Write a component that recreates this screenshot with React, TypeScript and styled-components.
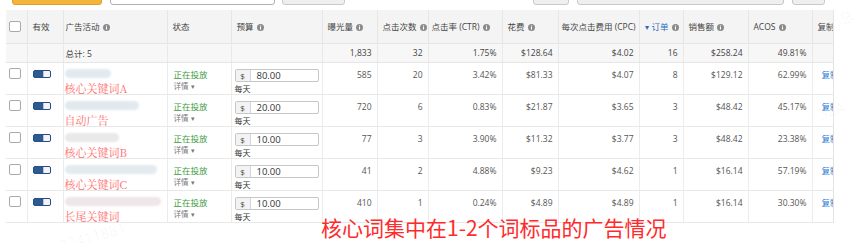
import React from 'react';
import styled, { createGlobalStyle } from 'styled-components';

const GlobalStyle = createGlobalStyle`
  html, body { margin: 0; padding: 0; background: #fff; }
  body { font-family: "Open Sans", "Noto Sans CJK SC", sans-serif; }
`;

interface CampaignRow {
  name: string;
  blur: number;
  blurColor: string;
  budget: string;
  impressions: string;
  clicks: string;
  ctr: string;
  spend: string;
  cpc: string;
  orders: string;
  sales: string;
  acos: string;
}

const rows: CampaignRow[] = [
  { name: '核心关键词A', blur: 46, blurColor: '#e2eaef', budget: '80.00', impressions: '585', clicks: '20', ctr: '3.42%', spend: '$81.33', cpc: '$4.07', orders: '8', sales: '$129.12', acos: '62.99%' },
  { name: '自动广告', blur: 74, blurColor: '#e1e9ee', budget: '20.00', impressions: '720', clicks: '6', ctr: '0.83%', spend: '$21.87', cpc: '$3.65', orders: '3', sales: '$48.42', acos: '45.17%' },
  { name: '核心关键词B', blur: 54, blurColor: '#e9e8ea', budget: '10.00', impressions: '77', clicks: '3', ctr: '3.90%', spend: '$11.32', cpc: '$3.77', orders: '3', sales: '$48.42', acos: '23.38%' },
  { name: '核心关键词C', blur: 92, blurColor: '#e3ebef', budget: '10.00', impressions: '41', clicks: '2', ctr: '4.88%', spend: '$9.23', cpc: '$4.62', orders: '1', sales: '$16.14', acos: '57.19%' },
  { name: '长尾关键词', blur: 96, blurColor: '#eee6e8', budget: '10.00', impressions: '410', clicks: '1', ctr: '0.24%', spend: '$4.89', cpc: '$4.89', orders: '1', sales: '$16.14', acos: '30.30%' },
];

const colWidths = [21, 36, 104, 64, 91, 55, 51, 74, 56, 81, 44, 65, 64, 21];

export default function App() {
  return (
    <Page>
      <GlobalStyle />
      <Toolbar>
        <OrangeButton />
        <SearchBox />
        <GrayButton $width={63} />
        <Spacer />
        <GrayButton $width={36} />
        <GrayButton $width={207} />
        <GrayButton $width={33} />
      </Toolbar>

      <Table>
        <colgroup>
          {colWidths.map((w, i) => <col key={i} style={{ width: w }} />)}
        </colgroup>
        <thead>
          <HeadRow>
            <HeadCell><Checkbox /></HeadCell>
            <HeadCell>有效</HeadCell>
            <HeadCell $pad={2}>广告活动<InfoIcon /></HeadCell>
            <HeadCell>状态</HeadCell>
            <HeadCell>预算<InfoIcon /></HeadCell>
            <HeadCell>曝光量<InfoIcon /></HeadCell>
            <HeadCell>点击次数<InfoIcon /></HeadCell>
            <HeadCell $pad={3}>点击率 (CTR)<InfoIcon /></HeadCell>
            <HeadCell>花费<InfoIcon /></HeadCell>
            <HeadCell $pad={3}>每次点击费用 (CPC)</HeadCell>
            <HeadCell $sorted><Caret>▾</Caret>订单<InfoIcon /></HeadCell>
            <HeadCell>销售额<InfoIcon /></HeadCell>
            <HeadCell>ACOS<InfoIcon /></HeadCell>
            <HeadCell>复制</HeadCell>
          </HeadRow>
        </thead>
        <tbody>
          <TotalRow>
            <TotalCell />
            <TotalCell />
            <TotalCell $pad={2}>总计: 5</TotalCell>
            <TotalCell />
            <TotalCell />
            <TotalCell $right>1,833</TotalCell>
            <TotalCell $right>32</TotalCell>
            <TotalCell $right>1.75%</TotalCell>
            <TotalCell $right>$128.64</TotalCell>
            <TotalCell $right>$4.02</TotalCell>
            <TotalCell $right>16</TotalCell>
            <TotalCell $right>$258.24</TotalCell>
            <TotalCell $right>49.81%</TotalCell>
            <TotalCell />
          </TotalRow>
          {rows.map((r, i) => (
            <DataRow key={i}>
              <Cell $top={5} $pad={3}><Checkbox /></Cell>
              <Cell $top={7} $pad={5}><Toggle><ToggleKnob /></Toggle></Cell>
              <Cell $top={6} $pad={1}>
                <BlurredName style={{ width: r.blur, background: r.blurColor }} />
                <NoteLabel>{r.name}</NoteLabel>
              </Cell>
              <Cell $top={6}>
                <StatusText>正在投放</StatusText>
                <DetailLink>详情<SmallCaret>▾</SmallCaret></DetailLink>
              </Cell>
              <Cell $top={6} $pad={3}>
                <BudgetInput>
                  <Currency>$</Currency>
                  <BudgetValue>{r.budget}</BudgetValue>
                </BudgetInput>
                <PerDay>每天</PerDay>
              </Cell>
              <Cell $right>{r.impressions}</Cell>
              <Cell $right>{r.clicks}</Cell>
              <Cell $right>{r.ctr}</Cell>
              <Cell $right>{r.spend}</Cell>
              <Cell $right>{r.cpc}</Cell>
              <Cell $right>{r.orders}</Cell>
              <Cell $right>{r.sales}</Cell>
              <Cell $right>{r.acos}</Cell>
              <Cell $pad={9}><CopyLink>复制</CopyLink></Cell>
            </DataRow>
          ))}
        </tbody>
      </Table>

      <Annotation>核心词集中在1-2个词标品的广告情况</Annotation>
      <Watermark $x={58} $y={226}>32411881</Watermark>
      <Watermark $x={818} $y={100}>32A</Watermark>
      <Watermark $x={838} $y={4}>总 2</Watermark>
    </Page>
  );
}

const InfoIcon = () => (
  <Info viewBox="0 0 10 10">
    <circle cx="5" cy="5" r="5" fill="#8a8a8a" />
    <rect x="4.2" y="4.3" width="1.6" height="3.6" fill="#fff" />
    <circle cx="5" cy="2.7" r="0.9" fill="#fff" />
  </Info>
);

const Page = styled.div`
  position: relative;
  width: 857px;
  height: 243px;
  overflow: hidden;
  padding: 0 6px;
  box-sizing: border-box;
  background: #fff;
`;

const Toolbar = styled.div`
  display: flex;
  align-items: flex-end;
  gap: 8px;
  width: 827px;
  height: 5px;
  padding: 0 8px 0 6px;
  box-sizing: border-box;
  overflow: hidden;
  margin-bottom: 5px;
`;

const OrangeButton = styled.div`
  width: 90px;
  height: 28px;
  flex-shrink: 0;
  background: #f4b43c;
  border: 1px solid #e0a12d;
  border-radius: 3px;
  box-sizing: border-box;
`;

const SearchBox = styled.div`
  width: 165px;
  height: 28px;
  flex-shrink: 0;
  background: #fff;
  border: 1px solid #b0b0b0;
  border-radius: 3px;
  box-sizing: border-box;
  margin-right: -1px;
`;

const GrayButton = styled.div<{ $width: number }>`
  width: ${p => p.$width}px;
  height: 28px;
  flex-shrink: 0;
  background: #efefef;
  border: 1px solid #c9c9c9;
  border-radius: 3px;
  box-sizing: border-box;
`;

const Spacer = styled.div`
  flex: 1;
`;

const Table = styled.table`
  width: 827px;
  table-layout: fixed;
  border-collapse: collapse;
  font-size: 8.5px;
  color: #555;
  border-right: 1px solid #e4e4e4;
  border-bottom: 1px solid #e4e4e4;
`;

const HeadRow = styled.tr`
  height: 33px;
  background: #f4f4f4;
`;

const HeadCell = styled.th<{ $pad?: number; $sorted?: boolean }>`
  text-align: left;
  font-weight: 400;
  color: ${p => (p.$sorted ? '#2a6fb8' : '#444')};
  padding: 0 0 0 ${p => p.$pad ?? 5}px;
  border-left: 1px solid #e6e6e6;
  border-bottom: 1px solid #e6e6e6;
  white-space: nowrap;
  overflow: hidden;
  vertical-align: middle;
  &:first-child { border-left: none; padding-left: 3px; }
`;

const Caret = styled.span`
  font-size: 8px;
  margin-right: 3px;
  color: #2a6fb8;
`;

const Info = styled.svg`
  width: 7px;
  height: 7px;
  margin-left: 3px;
  vertical-align: -1px;
`;

const TotalRow = styled.tr`
  height: 19px;
  background: #f7f7f7;
`;

const TotalCell = styled.td<{ $right?: boolean; $pad?: number }>`
  text-align: ${p => (p.$right ? 'right' : 'left')};
  padding: 0 ${p => (p.$right ? 5 : 0)}px 0 ${p => p.$pad ?? 5}px;
  border-left: 1px solid #e9e9e9;
  border-bottom: 1px solid #e6e6e6;
  color: #444;
  white-space: nowrap;
  vertical-align: middle;
  &:first-child { border-left: none; }
`;

const DataRow = styled.tr`
  height: 32px;
`;

const Cell = styled.td<{ $right?: boolean; $top?: number; $pad?: number }>`
  height: 32px;
  box-sizing: border-box;
  text-align: ${p => (p.$right ? 'right' : 'left')};
  vertical-align: top;
  padding: ${p => p.$top ?? 6}px ${p => (p.$right ? 5 : 0)}px 0 ${p => p.$pad ?? 6}px;
  line-height: 11px;
  border-left: 1px solid #ececec;
  border-bottom: 1px solid #e8e8e8;
  white-space: nowrap;
  overflow: hidden;
  &:first-child { border-left: none; }
`;

const Checkbox = styled.div`
  width: 12px;
  height: 11px;
  border: 1px solid #a9a9a9;
  border-radius: 2px;
  background: #fff;
  box-sizing: border-box;
`;

const Toggle = styled.div`
  display: flex;
  justify-content: flex-end;
  width: 18px;
  height: 8px;
  background: #2c5b91;
  border-radius: 2px;
  box-sizing: border-box;
  border: 1px solid #254f80;
`;

const ToggleKnob = styled.div`
  width: 7px;
  height: 100%;
  background: #f4f4f4;
  border-left: 1px solid #b9c2cc;
  border-radius: 0 1px 1px 0;
  box-sizing: border-box;
`;

const BlurredName = styled.div`
  height: 9px;
  border-radius: 5px;
  filter: blur(1.2px);
`;

const NoteLabel = styled.div`
  margin-top: 5px;
  font-family: "Noto Serif CJK SC", "Liberation Serif", "Noto Sans CJK SC", serif;
  font-size: 11px;
  line-height: 11px;
  height: 11px;
  color: #ff6a6a;
`;

const StatusText = styled.div`
  color: #3c9b3c;
  font-size: 8.5px;
`;

const DetailLink = styled.div`
  color: #777;
  font-size: 7.5px;
  margin-top: 1px;
`;

const SmallCaret = styled.span`
  font-size: 7px;
  margin-left: 2px;
`;

const BudgetInput = styled.div`
  display: flex;
  align-items: stretch;
  width: 84px;
  height: 13px;
  border: 1px solid #c6c6c6;
  border-radius: 2px;
  box-sizing: border-box;
  overflow: hidden;
`;

const Currency = styled.div`
  display: flex;
  align-items: center;
  justify-content: center;
  width: 14px;
  background: #f3f3f3;
  border-right: 1px solid #d6d6d6;
  color: #444;
  font-size: 8px;
`;

const BudgetValue = styled.div`
  display: flex;
  align-items: center;
  padding-left: 6px;
  color: #333;
  font-size: 9.5px;
`;

const PerDay = styled.div`
  margin-top: 2px;
  color: #333;
  font-size: 8px;
  line-height: 9px;
`;

const CopyLink = styled.span`
  color: #2a7ad0;
  font-size: 8.5px;
`;

const Annotation = styled.div`
  position: absolute;
  left: 321px;
  top: 215px;
  font-family: "Noto Sans CJK SC", sans-serif;
  font-size: 21px;
  line-height: 24px;
  color: #ff2b2b;
  white-space: nowrap;
`;

const Watermark = styled.div<{ $x: number; $y: number }>`
  position: absolute;
  left: ${p => p.$x}px;
  top: ${p => p.$y}px;
  font-size: 15px;
  color: rgba(0, 0, 0, 0.04);
  transform: rotate(-16deg);
  white-space: nowrap;
  pointer-events: none;
`;
